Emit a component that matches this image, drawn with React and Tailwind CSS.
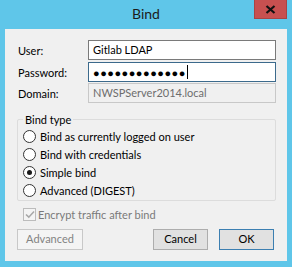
import React from 'react';

const font = { fontFamily: 'Lato, "Noto Sans", sans-serif' };

const Radio = ({ label, checked }) => (
  <div className="flex items-center h-[18px]">
    <span className="w-[13px] h-[13px] rounded-full border border-[#333333] bg-white flex items-center justify-center ml-[5px] mr-[4px]">
      {checked && <span className="w-[5px] h-[5px] rounded-full bg-[#1a1a1a]" />}
    </span>
    <span className="text-[11px] leading-[15px] text-black">{label}</span>
  </div>
);

const Field = ({ label, children, className }) => (
  <div className={`flex items-center h-[20px] ${className || ''}`}>
    <span className="w-[70px] text-[11px] leading-[15px] text-black">{label}</span>
    {children}
  </div>
);

export default function App() {
  return (
    <div className="w-[292px] h-[267px] bg-[#5fc6e9] flex flex-col" style={font}>
      {/* Title bar */}
      <div className="flex h-[29px] items-start">
        <div className="w-[38px]" />
        <div className="flex-1 text-center text-[14px] leading-[20px] pt-[4px] text-[#1b1b1b]">Bind</div>
        <button className="w-[33px] h-[19px] mr-[5px] bg-[#c75050] border border-[#a94444] border-t-0 flex items-center justify-center">
          <svg width="11" height="9" viewBox="0 0 11 9">
            <path d="M1.5 1 L9.5 8 M9.5 1 L1.5 8" stroke="#111" strokeWidth="2.2" />
          </svg>
        </button>
      </div>

      {/* Client area */}
      <div className="mx-[5px] h-[232px] bg-[#f0f0f0] flex flex-col pl-[13px] pr-[10px]">
        <Field label="User:" className="mt-[11px]">
          <div className="w-[188px] h-[20px] bg-white border border-[#7a7a7a] flex items-center px-[4px] text-[11px] text-black">
            Gitlab LDAP
          </div>
        </Field>
        <Field label="Password:" className="mt-[2px]">
          <div className="w-[188px] h-[20px] bg-white border border-[#3c6a8c] flex items-center px-[4px] text-black">
            <span className="text-[11px] tracking-[0.5px] leading-none" style={{ fontFamily: '"Noto Sans", sans-serif' }}>●●●●●●●●●●●●●</span>
            <span className="w-[1px] h-[14px] bg-black ml-[1px]" />
          </div>
        </Field>
        <Field label="Domain:" className="mt-[1px]">
          <div className="w-[188px] h-[20px] bg-[#f0f0f0] border border-[#c8c8c8] flex items-center px-[4px] text-[11px] text-[#6d6d6d]">
            NWSPServer2014.local
          </div>
        </Field>

        {/* Bind type group */}
        <div className="mt-[16px] -ml-[1px] w-[259px] h-[82px] border border-[#dcdcdc] rounded-[2px] flex flex-col">
          <div className="-mt-[8px] ml-[5px] px-[2px] bg-[#f0f0f0] w-fit text-[11px] leading-[15px] text-black">Bind type</div>
          <div className="flex flex-col">
            <Radio label="Bind as currently logged on user" />
            <Radio label="Bind with credentials" />
            <Radio label="Simple bind" checked />
            <Radio label="Advanced (DIGEST)" />
          </div>
        </div>

        {/* Encrypt checkbox */}
        <div className="flex items-center mt-[6px] ml-[5px] h-[14px]">
          <span className="w-[13px] h-[13px] border border-[#bcbcbc] bg-[#f4f4f4] flex items-center justify-center mr-[2px]">
            <svg width="10" height="9" viewBox="0 0 10 9">
              <path d="M1 4.5 L3.8 7.2 L9 1.5" stroke="#a8a8a8" strokeWidth="1.6" fill="none" />
            </svg>
          </span>
          <span className="text-[11px] leading-[15px] text-[#7a7a7a]">Encrypt traffic after bind</span>
        </div>

        {/* Buttons */}
        <div className="flex items-center mt-[8px] -ml-[1px] pr-[3px]">
          <button className="w-[66px] h-[21px] border border-[#c8c8c8] bg-[#f4f4f4] text-[11px] text-[#838383]">Advanced</button>
          <div className="flex-1" />
          <button className="w-[55px] h-[21px] border border-[#adadad] bg-[#e1e1e1] text-[11px] text-black">Cancel</button>
          <button className="w-[55px] h-[21px] ml-[11px] border border-[#3c7fb1] bg-[#e1e1e1] text-[11px] text-black">OK</button>
        </div>
      </div>
    </div>
  );
}
